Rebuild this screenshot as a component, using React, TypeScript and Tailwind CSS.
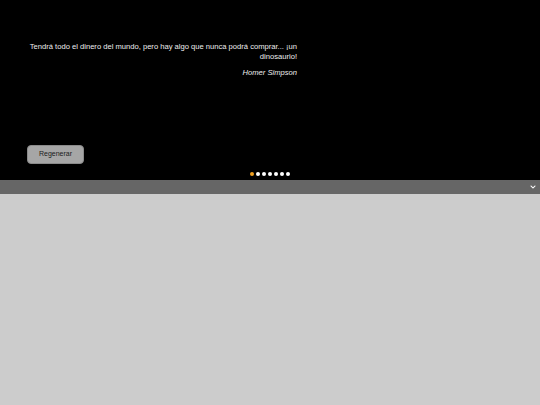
import { useState } from "react";
import { FaChevronDown } from "react-icons/fa";

const quotes = [
  {
    text: "Tendrá todo el dinero del mundo, pero hay algo que nunca podrá comprar... ¡un dinosaurio!",
    author: "Homer Simpson",
  },
];

const App = () => {
  const [active] = useState(0);
  const dots = [0, 1, 2, 3, 4, 5, 6];

  return (
    <div className="w-[540px] h-[405px] flex flex-col bg-[#cccccc] font-['Liberation_Sans',Arial,sans-serif]">
      <div className="h-[180px] bg-black flex flex-col">
        <div className="w-[270px] ml-[27px] mt-[42px] text-right text-[#eeeeee]">
          <p className="text-[7.6px] leading-[10px]">{quotes[active].text}</p>
          <p className="text-[7.6px] leading-[10px] italic mt-[6px]">{quotes[active].author}</p>
        </div>
        <button className="ml-[27px] mt-[67px] w-[57px] h-[19px] rounded-[4px] bg-[#a6a6a6] text-[7px] text-[#1a1a1a] border border-[#8a8a8a]">
          Regenerar
        </button>
        <div className="flex justify-center gap-[2px] mt-[8px]">
          {dots.map((d) => (
            <span
              key={d}
              className={
                d === active
                  ? "w-[4px] h-[4px] rounded-full bg-[#f0a020]"
                  : "w-[4px] h-[4px] rounded-full bg-white"
              }
            />
          ))}
        </div>
      </div>
      <div className="h-[14px] bg-[#666666] flex items-center justify-end pr-[4px]">
        <FaChevronDown className="text-white w-[6px] h-[6px]" />
      </div>
      <div className="flex-1 bg-[#cccccc]" />
    </div>
  );
};

export default App;
